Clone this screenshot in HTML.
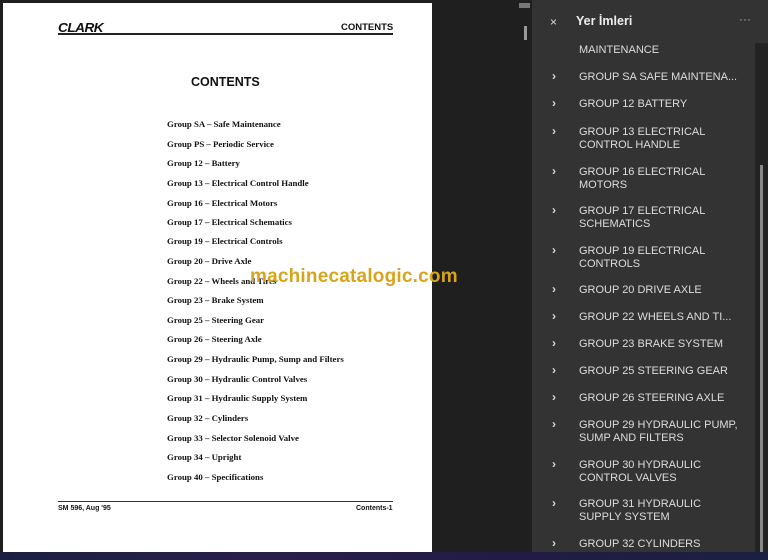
<!DOCTYPE html>
<html><head><meta charset="utf-8"><style>
*{margin:0;padding:0;box-sizing:border-box}
body{width:768px;height:560px;overflow:hidden;background:#1f1f1f;position:relative;font-family:"Liberation Sans",sans-serif}
.pg{position:absolute;left:3px;top:3px;width:429px;height:549px;background:#fff}
.a{position:absolute;white-space:nowrap}
.toc{position:absolute;left:167px;font-family:"Liberation Serif",serif;font-weight:bold;font-size:8.8px;color:#111;line-height:12px}
.pn{position:absolute;left:532px;top:0;width:236px;height:552px;background:#333}
.it{position:absolute;left:579px;font-size:11px;color:#ddd;line-height:13px}
.ch{position:absolute;left:552px;font-size:12px;color:#ddd;font-weight:bold;line-height:13px}
</style></head><body>
<div class="pg"></div>
<div class="a" style="left:58px;top:20px;font-weight:900;font-size:13px;font-style:italic;letter-spacing:-0.5px;color:#111;transform:scaleX(1.05);transform-origin:left">CLARK</div>
<div class="a" style="left:341px;top:22px;font-weight:bold;font-size:9.5px;color:#111">CONTENTS</div>
<div class="a" style="left:58px;top:33px;width:335px;height:2px;background:#222"></div>
<div class="a" style="left:191px;top:75px;font-weight:bold;font-size:12.5px;color:#111">CONTENTS</div>
<div class="toc" style="top:118px">Group SA – Safe Maintenance</div>
<div class="toc" style="top:138px">Group PS – Periodic Service</div>
<div class="toc" style="top:157px">Group 12 – Battery</div>
<div class="toc" style="top:177px">Group 13 – Electrical Control Handle</div>
<div class="toc" style="top:197px">Group 16 – Electrical Motors</div>
<div class="toc" style="top:216px">Group 17 – Electrical Schematics</div>
<div class="toc" style="top:235px">Group 19 – Electrical Controls</div>
<div class="toc" style="top:255px">Group 20 – Drive Axle</div>
<div class="toc" style="top:275px">Group 22 – Wheels and Tires</div>
<div class="toc" style="top:294px">Group 23 – Brake System</div>
<div class="toc" style="top:314px">Group 25 – Steering Gear</div>
<div class="toc" style="top:333px">Group 26 – Steering Axle</div>
<div class="toc" style="top:353px">Group 29 – Hydraulic Pump, Sump and Filters</div>
<div class="toc" style="top:373px">Group 30 – Hydraulic Control Valves</div>
<div class="toc" style="top:392px">Group 31 – Hydraulic Supply System</div>
<div class="toc" style="top:412px">Group 32 – Cylinders</div>
<div class="toc" style="top:432px">Group 33 – Selector Solenoid Valve</div>
<div class="toc" style="top:451px">Group 34 – Upright</div>
<div class="toc" style="top:471px">Group 40 – Specifications</div>
<div class="a" style="left:58px;top:501px;width:335px;height:1px;background:#333"></div>
<div class="a" style="left:58px;top:505px;font-weight:bold;font-size:7px;color:#111">SM 596, Aug '95</div>
<div class="a" style="left:356px;top:505px;font-weight:bold;font-size:7px;color:#111">Contents-1</div>
<div class="a" style="left:250px;top:266px;font-weight:bold;font-size:19px;color:#d6a51c;letter-spacing:0.2px">machinecatalogic.com</div>
<div class="a" style="left:519px;top:3px;width:11px;height:5px;background:#777"></div>
<div class="a" style="left:524px;top:26px;width:3px;height:14px;background:#999"></div>
<div class="pn"></div>
<div class="a" style="left:755px;top:43px;width:13px;height:509px;background:#232323"></div>
<div class="a" style="left:760px;top:165px;width:3px;height:387px;background:#888"></div>
<div class="a" style="left:550px;top:15px;font-size:12px;color:#ddd">×</div>
<div class="a" style="left:576px;top:14px;font-size:12.5px;font-weight:bold;color:#eee">Yer İmleri</div>
<div class="a" style="left:739px;top:12px;font-size:12px;color:#aaa">···</div>
<div class="it" style="top:44px">MAINTENANCE</div>
<div class="ch" style="top:70px">›</div><div class="it" style="top:71px">GROUP SA SAFE MAINTENA...</div>
<div class="ch" style="top:97px">›</div><div class="it" style="top:98px">GROUP 12 BATTERY</div>
<div class="ch" style="top:125px">›</div><div class="it" style="top:126px">GROUP 13 ELECTRICAL<br>CONTROL HANDLE</div>
<div class="ch" style="top:165px">›</div><div class="it" style="top:166px">GROUP 16 ELECTRICAL<br>MOTORS</div>
<div class="ch" style="top:204px">›</div><div class="it" style="top:205px">GROUP 17 ELECTRICAL<br>SCHEMATICS</div>
<div class="ch" style="top:244px">›</div><div class="it" style="top:245px">GROUP 19 ELECTRICAL<br>CONTROLS</div>
<div class="ch" style="top:283px">›</div><div class="it" style="top:284px">GROUP 20 DRIVE AXLE</div>
<div class="ch" style="top:310px">›</div><div class="it" style="top:311px">GROUP 22 WHEELS AND TI...</div>
<div class="ch" style="top:337px">›</div><div class="it" style="top:338px">GROUP 23 BRAKE SYSTEM</div>
<div class="ch" style="top:364px">›</div><div class="it" style="top:365px">GROUP 25 STEERING GEAR</div>
<div class="ch" style="top:391px">›</div><div class="it" style="top:392px">GROUP 26 STEERING AXLE</div>
<div class="ch" style="top:418px">›</div><div class="it" style="top:419px">GROUP 29 HYDRAULIC PUMP,<br>SUMP AND FILTERS</div>
<div class="ch" style="top:458px">›</div><div class="it" style="top:459px">GROUP 30 HYDRAULIC<br>CONTROL VALVES</div>
<div class="ch" style="top:497px">›</div><div class="it" style="top:498px">GROUP 31 HYDRAULIC<br>SUPPLY SYSTEM</div>
<div class="ch" style="top:537px">›</div><div class="it" style="top:538px">GROUP 32 CYLINDERS</div>
<div class="a" style="left:0;top:552px;width:768px;height:8px;background:linear-gradient(90deg,#1c2040,#2a1f4a,#221c44,#1c2040)"></div>
</body></html>
